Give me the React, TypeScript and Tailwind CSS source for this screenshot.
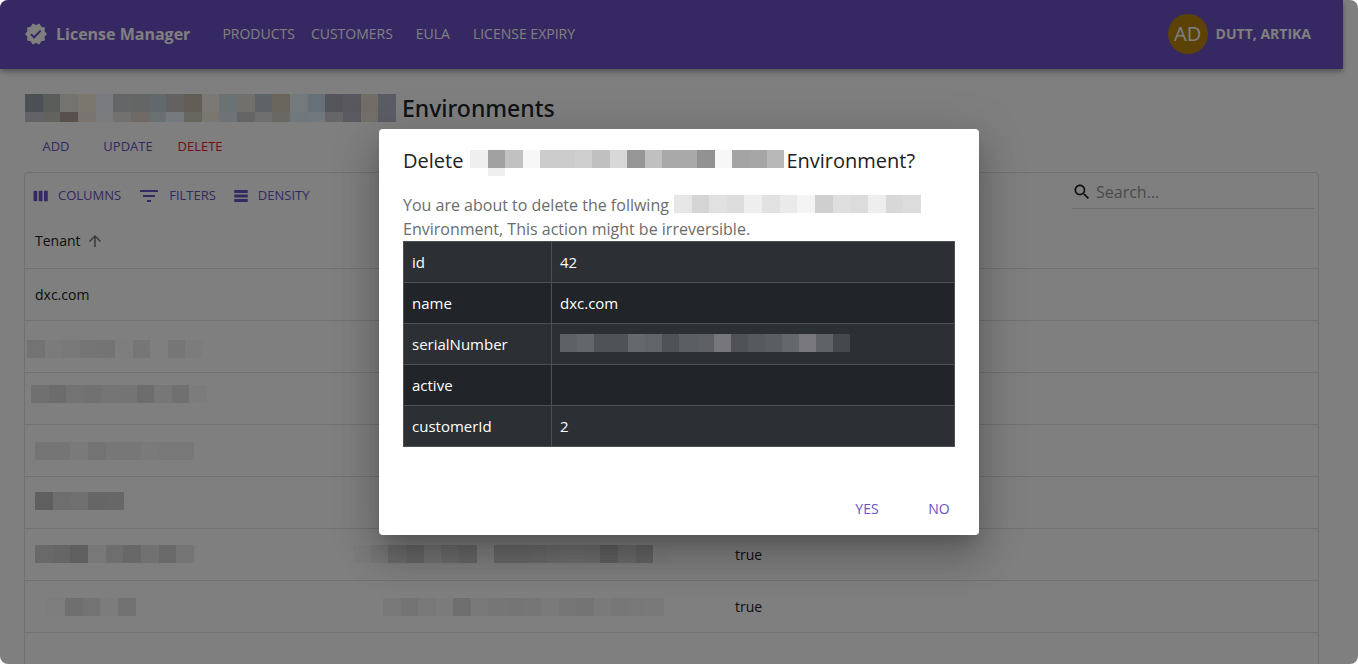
import React from "react";

type MosaicProps = { rows: string[]; className: string; label: string };

/* Pixelated strip that hides a value. Each row lists its cells as hex colours or two-digit grey levels. */
function Mosaic({ rows, className, label }: MosaicProps) {
  return (
    <span role="img" aria-label={label} className={`flex shrink-0 flex-col ${className}`}>
      {rows.map((row, r) => (
        <span key={r} className={r === 0 ? "flex h-[18px]" : "flex flex-1"}>
          {row.split(" ").map((c, i) => (
            <span key={i} className="flex-1" style={{ backgroundColor: `#${c.length === 2 ? c + c + c : c}` }} />
          ))}
        </span>
      ))}
    </span>
  );
}

function Icon({ d, className }: { d: string; className: string }) {
  return (
    <svg viewBox="0 0 24 24" fill="currentColor" aria-hidden="true" className={`shrink-0 ${className}`}>
      <path d={d} />
    </svg>
  );
}

const VERIFIED =
  "M23 12l-2.44-2.79.34-3.69-3.61-.82-1.89-3.2L12 2.96 8.6 1.5 6.71 4.69 3.1 5.5l.34 3.7L1 12l2.44 2.79-.34 3.7 3.61.82L8.6 22.5l3.4-1.47 3.4 1.46 1.89-3.19 3.61-.82-.34-3.69L23 12zm-12.91 4.72l-3.8-3.81 1.48-1.48 2.32 2.33 5.85-5.87 1.48 1.48-7.33 7.35z";
const COLUMNS =
  "M6 5H3c-.55 0-1 .45-1 1v12c0 .55.45 1 1 1h3c.55 0 1-.45 1-1V6c0-.55-.45-1-1-1zm14 0h-3c-.55 0-1 .45-1 1v12c0 .55.45 1 1 1h3c.55 0 1-.45 1-1V6c0-.55-.45-1-1-1zm-7 0h-3c-.55 0-1 .45-1 1v12c0 .55.45 1 1 1h3c.55 0 1-.45 1-1V6c0-.55-.45-1-1-1z";
const FILTERS = "M10 18h4v-2h-4v2zM3 6v2h18V6H3zm3 7h12v-2H6v2z";
const DENSITY = "M21 8H3V4h18v4zm0 2H3v4h18v-4zm0 6H3v4h18v-4z";
const SEARCH =
  "M15.5 14h-.79l-.28-.27C15.41 12.59 16 11.11 16 9.5 16 5.91 13.09 3 9.5 3S3 5.91 3 9.5 5.91 16 9.5 16c1.61 0 3.09-.59 4.23-1.57l.27.28v.79l5 4.99L20.49 19l-4.99-5zm-6 0C7.01 14 5 11.99 5 9.5S7.01 5 9.5 5 14 7.01 14 9.5 11.99 14 9.5 14z";
const ARROW_UP = "M4 12l1.41 1.41L11 7.83V20h2V7.83l5.58 5.59L20 12l-8-8-8 8z";

const NAV = ["Products", "Customers", "EULA", "License Expiry"];

const TOOLS = [
  { label: "Columns", d: COLUMNS, size: "size-[18px]" },
  { label: "Filters", d: FILTERS, size: "size-6" },
  { label: "Density", d: DENSITY, size: "size-[18px]" },
];

type Row = { tenant: React.ReactNode; serial?: React.ReactNode; active?: string };

const ROWS: Row[] = [
  { tenant: "dxc.com" },
  { tenant: <Mosaic label="Hidden tenant" className="-ml-2 mt-1 w-[176px]" rows={["e6 f6 f2 ea e8 fc ec ff ec f8"]} /> },
  { tenant: <Mosaic label="Hidden tenant" className="-ml-1 mb-2.5 w-[176px]" rows={["e0 d8 e6 e2 ea e8 da ee e0 f8"]} /> },
  { tenant: <Mosaic label="Hidden tenant" className="w-[159px]" rows={["ea ea f4 e6 ee ee f4 f0 f0"]} /> },
  { tenant: <Mosaic label="Hidden tenant" className="mb-1 w-[89px]" rows={["be dc e0 cc ce"]} /> },
  {
    tenant: <Mosaic label="Hidden tenant" className="mb-0.5 w-[159px]" rows={["d2 cc be f0 dc d0 e2 d2 ea"]} />,
    serial: (
      <Mosaic
        label="Hidden serial number"
        className="mb-0.5 -ml-8 w-[318px]"
        rows={["f8 ee d6 cc e6 d8 ce fc d2 d2 d4 da dc da c2 d6 c8 fa"]}
      />
    ),
    active: "true",
  },
  {
    tenant: <Mosaic label="Hidden tenant" className="ml-3 w-[89px]" rows={["fa de e6 f8 e4"]} />,
    serial: (
      <Mosaic
        label="Hidden serial number"
        className="-ml-0.5 w-[281px]"
        rows={["f2 e8 f0 f6 de f2 ec ea ec f4 ec e8 f4 ee f0 f2"]}
      />
    ),
    active: "true",
  },
  { tenant: "" },
];

const DETAILS: [string, React.ReactNode][] = [
  ["id", "42"],
  ["name", "dxc.com"],
  [
    "serialNumber",
    <Mosaic
      label="Hidden serial number"
      className="mb-0.5 w-[290px]"
      rows={[
        "5e6264 646769 505356 505356 65696b 616567 4f5257 5b5f61 5e6163 77777b 505356 565a5c 5a5e60 64686a 77777c 5f6365 45484d",
      ]}
    />,
  ],
  ["active", ""],
  ["customerId", "2"],
];

function Header() {
  return (
    <header className="mr-[15px] flex h-[69px] items-center bg-[#6a50c6] px-6 pb-0.5 text-white shadow-[0_2px_4px_-1px_rgba(0,0,0,0.2),0_4px_5px_0_rgba(0,0,0,0.14),0_1px_10px_0_rgba(0,0,0,0.12)]">
      <Icon d={VERIFIED} className="size-6" />
      <span className="ml-2 text-base font-bold">License Manager</span>
      <nav className="ml-6 flex">
        {NAV.map((item) => (
          <a key={item} href="#" className="min-w-16 px-2 py-2 text-center text-sm uppercase">
            {item}
          </a>
        ))}
      </nav>
      <button type="button" className="ml-auto flex items-center gap-2 pr-2 text-sm font-bold uppercase">
        <span className="flex size-10 items-center justify-center rounded-full bg-[#b8860b] text-xl font-normal">AD</span>
        Dutt, Artika
      </button>
    </header>
  );
}

function EnvironmentGrid() {
  return (
    <section className="mt-[10px] rounded-t border border-[#e0e0e0]">
      <div className="flex items-start justify-between px-1 pt-1">
        <div className="flex gap-2">
          {TOOLS.map((t) => (
            <button
              key={t.label}
              type="button"
              className="flex h-9 items-center gap-2 pt-px pr-[5px] pl-[3px] text-[13px] text-[#6a50c6] uppercase"
            >
              <Icon d={t.d} className={t.size} />
              {t.label}
            </button>
          ))}
        </div>
        <label className="flex h-8 w-[242px] items-center border-b border-[#dcdcdc] pb-px text-[#212121]">
          <Icon d={SEARCH} className="size-5" />
          <input
            type="search"
            aria-label="Search"
            placeholder="Search…"
            className="ml-1 w-full min-w-0 bg-transparent text-base outline-none placeholder:text-[#949494]"
          />
        </label>
      </div>
      <table className="w-full table-fixed text-left text-sm text-[#212121]">
        <colgroup>
          <col className="w-[350px]" />
          <col className="w-[350px]" />
          <col />
        </colgroup>
        <thead>
          <tr className="h-[55px] border-b border-[#e0e0e0]">
            <th className="px-[10px] pt-0.5 font-medium">
              <span className="flex items-center gap-[5px]">
                Tenant
                <Icon d={ARROW_UP} className="size-[18px] text-[#757575]" />
              </span>
            </th>
            <th />
            <th />
          </tr>
        </thead>
        <tbody>
          {ROWS.map((row, i) => (
            <tr key={i} className="h-[52px] border-b border-[#e0e0e0]">
              <td className="px-[10px] pt-0.5">{row.tenant}</td>
              <td className="px-[10px] pt-0.5">{row.serial}</td>
              <td className="px-[10px] pt-0.5">{row.active}</td>
            </tr>
          ))}
        </tbody>
      </table>
    </section>
  );
}

function DeleteDialog() {
  return (
    <div
      role="dialog"
      aria-modal="true"
      aria-labelledby="dialog-title"
      className="w-full max-w-[600px] rounded bg-white shadow-[0_11px_15px_-7px_rgba(0,0,0,0.2),0_24px_38px_3px_rgba(0,0,0,0.14),0_9px_46px_8px_rgba(0,0,0,0.12)]"
    >
      <h2 id="dialog-title" className="flex h-16 items-center px-6 text-xl text-[#212121]">
        Delete
        <Mosaic
          label="hidden name"
          className="mt-1 mr-0.5 ml-[7px] h-[26px] w-[314px]"
          rows={[
            "ef a0 c1 f7 cc cc cf c0 d8 96 c0 a9 a9 92 f7 a4 a6 b8",
            "ff ef ff ff ff ff ff ff ff ff ff ff ff ff ff ff ff ff",
          ]}
        />
        Environment?
      </h2>
      <div className="px-6 pb-5">
        <p className="text-base text-[#6c6c6c]">
          <span className="flex items-center gap-[5px]">
            You are about to delete the follwing
            <Mosaic label="hidden name" className="mb-0.5 w-[247px]" rows={["e6 d5 e1 dd ee e1 ea f4 cf df dc ee d8 dc"]} />
          </span>
          Environment, This action might be irreversible.
        </p>
        <table className="mb-4 w-full table-fixed border-collapse bg-[#212529] text-left text-[15px] text-white">
          <colgroup>
            <col className="w-[148px]" />
            <col />
          </colgroup>
          <tbody>
            {DETAILS.map(([name, value]) => (
              <tr key={name} className="h-[41px] odd:bg-[#2c3034]">
                <th scope="row" className="border border-[#4d5154] px-2 font-normal">
                  {name}
                </th>
                <td className="border border-[#4d5154] px-2">{value}</td>
              </tr>
            ))}
          </tbody>
        </table>
      </div>
      <div className="flex justify-end gap-2 p-2">
        {["Yes", "No"].map((a) => (
          <button key={a} type="button" className="h-9 min-w-16 text-sm text-[#6a50c6] uppercase">
            {a}
          </button>
        ))}
      </div>
    </div>
  );
}

export default function App() {
  return (
    <div className="relative h-screen overflow-hidden rounded-lg bg-white font-['Open_Sans','Noto_Sans',sans-serif]">
      <Header />
      <main className="mr-[15px] px-6 pt-6">
        <h1 className="flex h-[30px] items-center gap-1.5 pl-px font-['Noto_Sans','Open_Sans',sans-serif] text-[23px] font-medium text-[#212529]">
          <Mosaic
            label="Hidden product"
            className="h-7 w-[371px]"
            rows={[
              "94a0a6 b4bcb6 eae6e0 f4eede f4f6fc caccd0 c8caca c4d2d8 c6c4c2 c4bcac f6f2ec d6e4e6 e4deda bcc6cc d4caba e6f4fc cce0f2 aaacb8 b0b0bc e6dad0 b4bac6",
              "c2c6cc c4c4be aea09a f2e8de f6f8fc e4e2de e0d4ce d4dee4 e8f4fc d0ccc2 f2eee0 dae6ec c8c8c8 e0dede d4d0c8 e2f0f8 e2f2fc ccccd0 b4b4c0 e6ded6 b6beca",
            ]}
          />
          Environments
        </h1>
        <div className="mt-2 flex gap-2 text-[13px] text-[#6a50c6]">
          <button type="button" className="h-[31px] min-w-16 pt-px uppercase">Add</button>
          <button type="button" className="h-[31px] min-w-16 pt-px uppercase">Update</button>
          <button type="button" className="h-[31px] min-w-16 pt-px text-[#e0261c] uppercase">Delete</button>
        </div>
        <EnvironmentGrid />
      </main>
      <div className="absolute inset-0 flex items-center justify-center bg-black/50">
        <DeleteDialog />
      </div>
    </div>
  );
}
